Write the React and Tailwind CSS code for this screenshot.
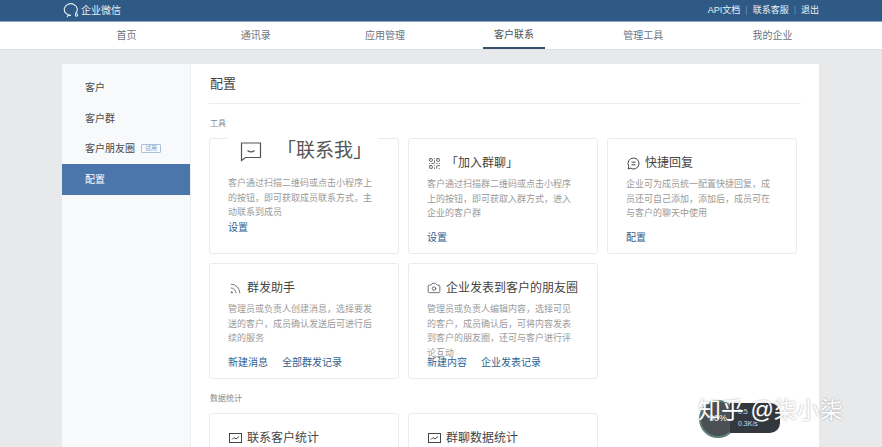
import { Camera, QrCode, Rss, MessageSquare } from "lucide-react";

const font = { fontFamily: '"Liberation Sans", "Noto Sans CJK SC", sans-serif' };

const tabs = ["首页", "通讯录", "应用管理", "客户联系", "管理工具", "我的企业"];

function ChartIcon() {
  return (
    <svg width="13" height="12" viewBox="0 0 13 12" fill="none" stroke="#444" strokeWidth="1">
      <rect x="0.5" y="1.5" width="12" height="9" />
      <path d="M3 7.5l2-2 2 1.5 3-2.5" />
    </svg>
  );
}

function ReplyIcon() {
  return (
    <svg width="13" height="13" viewBox="0 0 13 13" fill="none" stroke="#444" strokeWidth="1">
      <path d="M6.5 1a5.5 5.5 0 1 1-3 10.1L1.2 12l.6-2.6A5.5 5.5 0 0 1 6.5 1z" />
      <path d="M4.5 5.2h4M4.5 7.8h4" />
    </svg>
  );
}

function ContactIcon() {
  return (
    <svg width="22" height="21" viewBox="0 0 22 21" fill="none" stroke="#555" strokeWidth="1.2">
      <path d="M1.5 2h19v14.5H5.5l-4 3z" />
      <path d="M7.5 9.5c2 1.6 5 1.6 7 0" />
    </svg>
  );
}

function Card({ icon, title, desc, links, className = "" }) {
  return (
    <div className={`h-[116px] w-[190px] shrink-0 rounded-[3px] border border-[#e9ebee] bg-white px-[18px] pt-[16px] ${className}`}>
      <div className="flex h-4 items-center gap-[5px] text-[12px] leading-4 text-[#444]">
        <span className="flex w-[14px] shrink-0 justify-center">{icon}</span>
        <span className="whitespace-nowrap">{title}</span>
      </div>
      <p className="mt-[6px] h-[45px] text-[9px] leading-[14.5px] text-[#9a9a9a]">{desc}</p>
      <div className="mt-[8px] flex gap-[14px] text-[10px] leading-4 text-[#2f5f8f]">
        {links.map((l) => (
          <span key={l}>{l}</span>
        ))}
      </div>
    </div>
  );
}

function App() {
  return (
    <div style={font} className="relative h-[447px] w-[882px] overflow-hidden bg-[#e8e9eb]">
      <header className="flex h-[22px] items-center justify-between border-b border-[#8aa5c0] bg-[#2f5a86] pl-[62px] pr-[63px] text-white">
        <div className="flex items-center gap-[2px]">
          <svg width="17" height="15" viewBox="0 0 17 15" fill="none" stroke="#e6edf4" strokeWidth="1.1">
            <path d="M13.5 10.5A6.5 5.8 0 1 0 9 12.3c-1 .3-2 .3-3 .2L5 14" />
            <circle cx="14.5" cy="12" r="1.2" />
          </svg>
          <span className="text-[10px] text-[#e6edf4]">企业微信</span>
        </div>
        <div className="flex items-center text-[9px] text-[#eef2f6]">
          <span>API文档</span>
          <span className="mx-[5px] text-[#6f8eae]">|</span>
          <span>联系客服</span>
          <span className="mx-[5px] text-[#6f8eae]">|</span>
          <span>退出</span>
        </div>
      </header>

      <nav className="grid h-[28px] grid-cols-6 border-b border-[#dfe1e4] bg-white pl-[62px] pr-[45px] text-[10px] text-[#6b7480]">
        {tabs.map((t) => (
          <div key={t} className="flex justify-center">
            <span className={`flex h-[27px] items-center justify-center ${t === "客户联系" ? "w-[62px] border-b-2 border-[#34506d] text-[#4a5560]" : ""}`}>
              {t}
            </span>
          </div>
        ))}
      </nav>

      <main className="ml-[62px] mt-[14px] flex h-[400px] w-[757px] rounded-t-[2px] bg-white">
        <aside className="w-[129px] shrink-0 border-r border-[#eef0f2] bg-[#f8f9fb] pt-[8px] text-[10px] text-[#4a4a4a]">
          <div className="flex h-[31px] items-center pl-[23px]">客户</div>
          <div className="flex h-[30px] items-center pl-[23px]">客户群</div>
          <div className="flex h-[31px] items-center pl-[23px]">
            客户朋友圈
            <span className="ml-[6px] rounded-[1px] border border-[#a9c0d8] px-[3px] text-[6px] leading-[7px] text-[#7f9fc0]">试用</span>
          </div>
          <div className="flex h-[31px] items-center bg-[#4a76ab] pl-[23px] text-white">配置</div>
        </aside>

        <section className="min-w-0 flex-1 pl-[18px]">
          <h1 className="flex h-[40px] w-[592px] items-center border-b border-[#eceef0] pl-px text-[13px] font-normal text-[#444]">配置</h1>
          <div className="mt-[14px] pl-px text-[8px] leading-3 text-[#8a8a8a]">工具</div>

          <div className="mt-[8px] flex gap-[9px]">
            <div className="relative h-[116px] w-[190px] shrink-0 rounded-[3px] border border-[#e9ebee] bg-white px-[18px]">
              <div className="absolute -top-px left-[18px] flex h-[24px] w-[150px] items-center gap-[15px] bg-white pl-[12px] pt-[2px] text-[19px] text-[#555]">
                <ContactIcon />
                <span className="whitespace-nowrap">「联系我」</span>
              </div>
              <p className="mt-[37px] h-[45px] text-[9px] leading-[14.5px] text-[#9a9a9a]">客户通过扫描二维码或点击小程序上的按钮，即可获取成员联系方式，主动联系到成员</p>
              <div className="mt-[-1px] text-[10px] leading-4 text-[#2f5f8f]">设置</div>
            </div>
            <Card
              icon={<QrCode size={13} strokeWidth={1.5} color="#444" />}
              title="「加入群聊」"
              desc="客户通过扫描群二维码或点击小程序上的按钮，即可获取入群方式，进入企业的客户群"
              links={["设置"]}
            />
            <Card
              icon={<ReplyIcon />}
              title="快捷回复"
              desc="企业可为成员统一配置快捷回复，成员还可自己添加，添加后，成员可在与客户的聊天中使用"
              links={["配置"]}
            />
          </div>

          <div className="mt-[9px] flex gap-[9px]">
            <Card
              icon={<Rss size={13} strokeWidth={1.3} color="#444" />}
              title="群发助手"
              desc="管理员或负责人创建消息，选择要发送的客户，成员确认发送后可进行后续的服务"
              links={["新建消息", "全部群发记录"]}
            />
            <Card
              icon={<Camera size={14} strokeWidth={1.3} color="#444" />}
              title="企业发表到客户的朋友圈"
              desc="管理员或负责人编辑内容，选择可见的客户，成员确认后，可将内容发表到客户的朋友圈，还可与客户进行评论互动"
              links={["新建内容", "企业发表记录"]}
            />
          </div>

          <div className="mt-[14px] pl-px text-[8px] leading-3 text-[#8a8a8a]">数据统计</div>

          <div className="mt-[8px] flex gap-[9px]">
            <Card icon={<ChartIcon />} title="联系客户统计" desc="" links={[]} />
            <Card icon={<ChartIcon />} title="群聊数据统计" desc="" links={[]} />
          </div>
        </section>
      </main>

      {/* speed widget + watermark sit on top of the page */}
      <div className="absolute left-[699px] top-[400px] flex h-[38px] w-[38px] items-center justify-center rounded-full border-2 border-[#5e7f78] bg-[#4b5054] text-[9px] text-white">
        90%
      </div>
      <div className="absolute left-[730px] top-[403px] flex h-[30px] w-[50px] flex-col justify-center rounded-r-[10px] bg-[#33383f] pl-[8px] text-[7px] leading-[12px] text-[#d5dae0]">
        <span>0.5</span>
        <span>0.3K/s</span>
      </div>
      <div className="absolute left-[698px] top-[392px] flex items-center whitespace-nowrap text-[23px] leading-9 text-white [text-shadow:0_0_2px_rgba(90,90,90,0.6)]">
        知乎 @柒小柒
      </div>
    </div>
  );
}

export default App;
